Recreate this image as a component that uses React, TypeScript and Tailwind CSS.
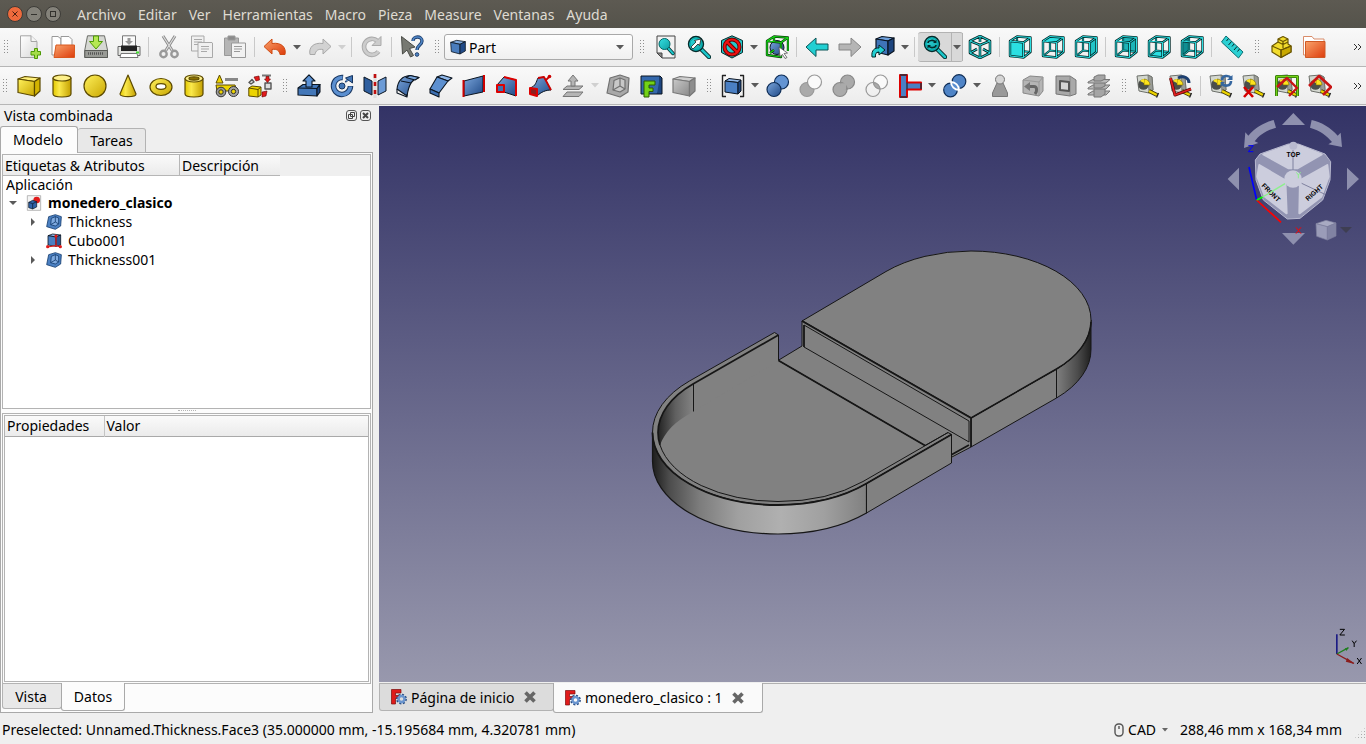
import type { ReactNode } from "react";

const INK = "#0b1521";
const TEAL_INK = "#042a2a";

/* ---------- shared gradients ---------- */

function Gradients() {
    const stops: [string, string, string][] = [
        ["gYellow", "#fff15c", "#c9a600"],
        ["gBlue", "#7ba6dc", "#204a87"],
        ["gGrey", "#c9c9c9", "#8a8a8a"],
        ["gTeal", "#34e0e2", "#0f9ea2"],
        ["gOrange", "#f9a36b", "#dd3c0c"],
        ["gPaper", "#ffffff", "#d9d9d9"],
    ];
    return (
        <svg className="absolute h-0 w-0" aria-hidden="true">
            <defs>
                {stops.map(([id, from, to]) => (
                    <linearGradient key={id} id={id} x1="0" y1="0" x2="1" y2="1">
                        <stop offset="0" stopColor={from} />
                        <stop offset="1" stopColor={to} />
                    </linearGradient>
                ))}
                <linearGradient id="gBarrel" x1="0" y1="0" x2="1" y2="0">
                    <stop offset="0" stopColor="#e3c800" />
                    <stop offset="0.350" stopColor="#fbe94c" />
                    <stop offset="1" stopColor="#c4a000" />
                </linearGradient>
            </defs>
        </svg>
    );
}

const Svg = ({ children }: { children: ReactNode }) => (
    <svg viewBox="0 0 24 24" className="h-6 w-6 shrink-0" fill="none" strokeLinejoin="round" aria-hidden="true">
        {children}
    </svg>
);

/* ---------- icon parts ---------- */

const Solid = ({ fill, top, side, ink = INK }: { fill: string; top: string; side: string; ink?: string }) => (
    <g stroke={ink} strokeWidth="1.2">
        <path d="M1 5L8 2.5 23 4 17.500 7.500z" fill={top} />
        <path d="M1 5L17.500 7.500V22L1 18.500z" fill={fill} />
        <path d="M17.500 7.500L23 4V17L17.500 22z" fill={side} />
    </g>
);

const Lens = ({ children }: { children?: ReactNode }) => (
    <>
        <path d="M14.500 14.500L22 22" stroke={TEAL_INK} strokeWidth="4.500" strokeLinecap="round" />
        <path d="M14.500 14.500L22 22" stroke="#1cc5c9" strokeWidth="2.500" strokeLinecap="round" />
        <circle cx="9" cy="9" r="7.500" fill="url(#gTeal)" stroke={TEAL_INK} strokeWidth="1.400" />
        <circle cx="9" cy="9" r="6" stroke="#0aa" strokeWidth="1" />
        {children}
    </>
);

const faces: Record<string, string> = {
    front: "M2 6L15.500 7.500V22.500L2 21z",
    top: "M2 6L9 1.500 22.500 2.500 15.500 7.500z",
    right: "M15.500 7.500L22.500 2.500V17L15.500 22.500z",
    rear: "M9 1.500L22.500 2.500V17L9 15.500z",
    bottom: "M2 21L9 15.500 22.500 17 15.500 22.500z",
    left: "M2 6L9 1.500V15.500L2 21z",
};

const faceFill: Record<string, string> = {
    front: "#2bdfe2",
    top: "#2bdfe2",
    right: "#22c4c7",
    rear: "#1db4b8",
    bottom: "#2bdfe2",
    left: "#0e8d91",
};

const WireCube = ({ face }: { face: string }) => {
    const back = "M9 1.500V15.500M9 15.500L2 21M9 15.500L22.500 17";
    const front = "M2 6L15.500 7.500V22.500L2 21zM2 6L9 1.500 22.500 2.500 15.500 7.500M22.500 2.500V17L15.500 22.500";
    const hidden = face === "rear" || face === "bottom" || face === "left";
    return (
        <>
            {hidden && <path d={faces[face]} fill={faceFill[face]} />}
            <path d={back} stroke={TEAL_INK} strokeWidth="2.200" />
            <path d={back} stroke="#1fc9cc" strokeWidth="0.900" />
            {!hidden && <path d={faces[face]} fill={faceFill[face]} />}
            <path d={front} stroke={TEAL_INK} strokeWidth="2.400" />
            <path d={front} stroke="#2bdfe2" strokeWidth="1" />
        </>
    );
};

const Tape = ({ children }: { children?: ReactNode }) => (
    <>
        <path d="M1 2L12 1 16 3 17 16 13 19 3 17z" fill="#d3d7cf" stroke="#6d706b" />
        <path d="M12 1L16 3 17 16 13 19z" fill="#9a9c97" stroke="#6d706b" strokeWidth="0.800" />
        <circle cx="7.500" cy="10.500" r="5.300" fill="#4b4e4b" />
        <path d="M8 11V5a6 6 0 0 1 6 6z" fill="#fce21c" stroke="#7a6a00" strokeWidth="0.600" />
        <path d="M4 7a5 5 0 0 1 4-2v4z" fill="#fce21c" />
        <path d="M13 17L21 21" stroke="#3a3300" strokeWidth="4" />
        <path d="M13 17L21 21" stroke="#edd400" strokeWidth="2.400" />
        <path d="M22.500 19L20.500 23.500" stroke="#222" strokeWidth="1.400" />
        {children}
    </>
);

const Shell = ({ grey }: { grey?: boolean }) => {
    const ink = grey ? "#707070" : "#123a6c";
    return (
        <g stroke={ink} strokeWidth="1.200">
            <path d="M4 4L14 1 23 4 22 18 14 23 1 19z" fill={grey ? "#a8a8a8" : "#4b80c2"} />
            <path d="M8 6.500L14 4 19 6V15L14 18 7 16z" fill={grey ? "#c8c8c8" : "#7faadf"} />
            <path d="M14 4V12L19 15M14 12L7 16" fill="none" />
        </g>
    );
};

const twoRings = (a: string, b: string, both: string, ink: string) => (
    <g stroke={ink} strokeWidth="1.200">
        <circle cx="15.500" cy="8" r="7" fill={a} />
        <circle cx="8" cy="15.500" r="7" fill={b} />
        <path d="M8.600 8.600a7 7 0 0 1 6.400 6.400a7 7 0 0 1-6.400-6.400z" fill={both} />
    </g>
);

const Caret = ({ tone = "text-[#5a5a5a]" }: { tone?: string }) => (
    <svg viewBox="0 0 8 5" className={`h-[5px] w-2 shrink-0 ${tone}`} aria-hidden="true">
        <path d="M0 0H8L4 4.500z" fill="currentColor" />
    </svg>
);

/* ---------- icons ---------- */

const icons: Record<string, ReactNode> = {
    new: (
        <>
            <path d="M2.500 .8H13L19 6.500V22.500H2.500z" fill="url(#gPaper)" stroke="#a5a5a5" />
            <path d="M13 .8V6.500H19" fill="#f5f5f5" stroke="#a5a5a5" />
            <path d="M16.500 13.500H19.500V16.500H22.500V20H19.500V23.500H16.500V20H13V16.500H16.500z" fill="#a6dd4a" stroke="#4e9a06" />
        </>
    ),
    open: (
        <>
            <path d="M1 1.500H7L10 4V20H1z" fill="#fff" stroke="#999" />
            <path d="M10 1.500H18L21 4.500V12H10z" fill="#fff" stroke="#999" />
            <path d="M3 22.500L5 10H23.500V22.500z" fill="url(#gOrange)" stroke="#d9581f" />
        </>
    ),
    save: (
        <>
            <path d="M3.500 .8H20.500L23.500 15V22.500H.8V15z" fill="#d6d8d3" stroke="#6b6d68" />
            <path d="M.8 15.500H23.500V22.500H.8z" fill="#999b96" stroke="#5a5c58" />
            <path d="M4 18.500H20" stroke="#555" strokeWidth="2.500" strokeDasharray="1 1" />
            <path d="M9.500 1H14.500V6.500H18.500L12 14 5.500 6.500H9.500z" fill="#b5e853" stroke="#4e9a06" />
        </>
    ),
    print: (
        <>
            <path d="M5.500 .8H18.500V12H5.500z" fill="#fafafa" stroke="#777" />
            <path d="M10.500 3H13.500V6H16L12 10 8 6H10.500z" fill="#999" />
            <path d="M1 11.500H23V20.500H1z" fill="#e3e4e1" stroke="#666" />
            <path d="M4 10.500H20V16H4z" fill="#222" />
            <path d="M4 18.500H20L21 22.500H3z" fill="#fff" stroke="#777" />
            <path d="M19 17.500H22" stroke="#4d3" strokeWidth="2" />
        </>
    ),
    cut: (
        <g stroke="#999" strokeWidth="1.800">
            <path d="M6 1L15.500 16M18 1L8.500 16" stroke="#8a8a8a" strokeWidth="3" />
            <path d="M6 1L15.500 16M18 1L8.500 16" stroke="#ddd" strokeWidth="1.200" />
            <circle cx="6.500" cy="19" r="3.200" strokeWidth="2.400" />
            <circle cx="17.500" cy="19" r="3.200" strokeWidth="2.400" />
        </g>
    ),
    copy: (
        <g fill="#f0f0f0" stroke="#a9a9a9">
            <path d="M1.500 1H14V16H1.500z" />
            <path d="M4 4.500H12M4 7H12M4 9.500H8" />
            <path d="M8 7.500H22L22.500 8V22.500H8z" />
            <path d="M11 11.500H19M11 14H19M11 16.500H17" />
        </g>
    ),
    paste: (
        <g stroke="#999">
            <path d="M1.500 3H15.500V20.500H1.500z" fill="#b5b5b5" />
            <path d="M5 1H12V5H5z" fill="#8c8c8c" />
            <path d="M8.500 8H22.500V22.500H8.500z" fill="#f2f2f2" />
            <path d="M11 11.500H19M11 14H19M11 16.500H17" />
        </g>
    ),
    undo: <path d="M9 4L1 11.500 9 19V14.500C14 13.500 16.500 16 17 19.500H22C23.500 13 19 7 9 8.500z" fill="url(#gOrange)" stroke="#cf4a12" />,
    redo: <path d="M15 4L23 11.500 15 19V14.500C10 13.500 7.500 16 7 19.500H2C.5 13 5 7 15 8.500z" fill="#d2d2d2" stroke="#a8a8a8" />,
    refresh: (
        <>
            <path d="M18.500 16.500A8 8 0 1 1 17.500 6" stroke="#aaa" strokeWidth="4.600" />
            <path d="M21 1.500V10.500H12z" fill="#ccc" stroke="#aaa" />
            <path d="M18.500 16.500A8 8 0 1 1 17.500 6" stroke="#ccc" strokeWidth="2.800" />
        </>
    ),
    whats: (
        <>
            <path d="M1.500 1.500L15 12 9.500 13.500 13.500 20.500 10.500 22 7 15 2.500 19z" fill="#777972" stroke="#4a4c47" />
            <path d="M13 6C13 1 22 .5 22 6 22 10 17 10 17 15" stroke="#20406e" strokeWidth="3.400" />
            <path d="M13 6C13 1 22 .5 22 6 22 10 17 10 17 15" stroke="#4f86c6" strokeWidth="1.600" />
            <circle cx="17" cy="19.500" r="1.800" fill="#4f86c6" stroke="#20406e" />
        </>
    ),
    part: (
        <g stroke={INK} strokeWidth="1.200">
            <path d="M1 5L10 2 23 4 15 8z" fill="#7fa9dc" />
            <path d="M1 5L15 8V22.500L2 19z" fill="#4a7dbd" />
            <path d="M15 8L23 4V18L15 22.500z" fill="#204a87" />
        </g>
    ),
    fitAll: (
        <>
            <path d="M3 1H21V23H8L3 18z" fill="#f2f2f2" stroke="#444" />
            <path d="M3 18H8V23z" fill="#888" stroke="#444" />
            <path d="M14 13L19 18.500" stroke={TEAL_INK} strokeWidth="3.500" strokeLinecap="round" />
            <path d="M14 13L19 18.500" stroke="#1cc5c9" strokeWidth="2" strokeLinecap="round" />
            <circle cx="10.500" cy="9" r="5.500" fill="url(#gTeal)" stroke="#066" />
        </>
    ),
    fitSel: (
        <Lens>
            <path d="M4 12L9 7 7.500 5.500 14 4 12.500 10.500 11 9 6 14z" fill="#fff" stroke="#222" strokeWidth="0.800" />
        </Lens>
    ),
    noDraw: (
        <>
            <path d="M12 .8L22.500 5.500V17.500L12 23 1.500 17.500V5.500z" fill="#23c8cb" stroke={TEAL_INK} />
            <circle cx="12" cy="12" r="7.500" stroke="#600" strokeWidth="4" />
            <path d="M7 7L17 17" stroke="#600" strokeWidth="4" />
            <circle cx="12" cy="12" r="7.500" stroke="#e11" strokeWidth="2.200" />
            <path d="M7 7L17 17" stroke="#e11" strokeWidth="2.200" />
        </>
    ),
    bbox: (
        <>
            <circle cx="12" cy="12.500" r="7" fill="url(#gBlue)" stroke={INK} />
            <path d="M2 6L16 7.500V22L2 20zM2 6L9 1.500 23 2.500 16 7.500M23 2.500V16M9 2V7M5 18L9 15" stroke="#0a3a0a" strokeWidth="2.400" />
            <path d="M2 6L16 7.500V22L2 20zM2 6L9 1.500 23 2.500 16 7.500M23 2.500V16M9 2V7M5 18L9 15" stroke="#14d814" strokeWidth="1.200" />
            <path d="M14 12L22.500 18 19 18.500 22 22.500 20 23.500 17.500 19.500 15 21.500z" fill="#fff" stroke="#555" strokeWidth="0.800" />
        </>
    ),
    back: <path d="M1 12L11 3V9H23V15H11V21.500z" fill="#22cfd2" stroke="#0a5456" />,
    forward: <path d="M23 12L13 3V9H1V15H13V21.500z" fill="#b5b5b5" stroke="#868686" />,
    link: (
        <>
            <g stroke={INK} strokeWidth="1.200">
                <path d="M5 4L11 1.500 23 3 17 6z" fill="#6fa0dc" />
                <path d="M5 4L17 6V20L5 17z" fill="#3f74b8" />
                <path d="M17 6L23 3V16L17 20z" fill="#1d457f" />
            </g>
            <path d="M1 22C0 15 4 12.500 8 13V10L14 15 8 20V17C5 17 4 19 4.500 22z" fill="#22cfd2" stroke={TEAL_INK} />
        </>
    ),
    zoomDraw: (
        <Lens>
            <path d="M5 8C5 5 11 4.500 12 7M13 10C13 13 7 13.500 6 11" stroke={TEAL_INK} strokeWidth="1.600" />
            <path d="M13.500 4.500V8H10zM4.500 13.500V10H8z" fill={TEAL_INK} />
        </Lens>
    ),
    iso: (
        <>
            <path d="M12 1L22 6V18L12 23 2 18V6zM2 6L12 10 22 6M12 10V23M12 1V7M2 18L9 14M22 18L15 14" stroke={TEAL_INK} strokeWidth="2.600" />
            <path d="M12 1L22 6V18L12 23 2 18V6zM2 6L12 10 22 6M12 10V23M12 1V7M2 18L9 14M22 18L15 14" stroke="#2bdfe2" strokeWidth="1" />
        </>
    ),
    ruler: (
        <>
            <path d="M6 1L23 17 18.500 23 1.500 7z" fill="#2bd0d3" stroke="#0b6f72" />
            <path d="M8.500 3.500L6.500 6M11.500 6.500L8.500 10M14 9L12 11.500M17 11.500L14 15M19.500 14L17.500 16.500" stroke={TEAL_INK} />
        </>
    ),
    parts: (
        <g stroke="#6b5700" strokeWidth="1.200">
            <path d="M3 11L9 7V4L14 1.500 19 4V9L22 11V17L12 22.500 3 17z" fill="#f2dc2c" />
            <path d="M12 15L22 11V17L12 22.500z" fill="#c9a900" />
            <path d="M3 11L12 15 22 11M12 15V22.500M9 7L14 9.500 19 7M9 4L14 6.500 19 4M14 6.500V13" />
        </g>
    ),
    group: (
        <>
            <path d="M1.500 1.500H10L12 4H22V20H1.500z" fill="#fff" stroke="#d98c6a" />
            <path d="M3.500 6.500H23V22.500H3.500z" fill="url(#gOrange)" stroke="#cf5a26" />
        </>
    ),
    box: <Solid fill="url(#gYellow)" top="#fff07a" side="#d3b300" ink="#5c4a00" />,
    cylinder: (
        <g stroke="#5c4a00" strokeWidth="1.200">
            <path d="M3 4V20C3 24 21 24 21 20V4z" fill="url(#gBarrel)" />
            <ellipse cx="12" cy="4" rx="9" ry="3" fill="#fdf08a" />
        </g>
    ),
    sphere: <circle cx="12" cy="12" r="11" fill="url(#gYellow)" stroke="#5c4a00" strokeWidth="1.200" />,
    cone: <path d="M12 1L20 20C20 23.500 4 23.500 4 20z" fill="url(#gBarrel)" stroke="#5c4a00" strokeWidth="1.200" />,
    torus: (
        <g stroke="#5c4a00" strokeWidth="1.200">
            <ellipse cx="12" cy="13" rx="11" ry="8.500" fill="url(#gYellow)" />
            <ellipse cx="12" cy="12.500" rx="5" ry="2.800" fill="#fff" />
        </g>
    ),
    tube: (
        <g stroke="#5c4a00" strokeWidth="1.200">
            <path d="M3 4.500V20C3 24 21 24 21 20V4.500z" fill="url(#gBarrel)" />
            <ellipse cx="12" cy="4.500" rx="9" ry="3.500" fill="#fdf08a" />
            <ellipse cx="12" cy="4.500" rx="5" ry="1.600" fill="#8a7000" />
        </g>
    ),
    primitives: (
        <>
            <path d="M4.500 1L8 9H1z" fill="#edd400" stroke="#5c4a00" />
            <path d="M10 5.500H23" stroke="#888" strokeWidth="3" />
            <path d="M1 11H20L22 17H2z" fill="#edd400" stroke="#5c4a00" />
            <circle cx="6" cy="18" r="4.800" fill="#999" stroke="#333" />
            <circle cx="18.500" cy="17.500" r="5" fill="#a5a5a5" stroke="#333" />
            <circle cx="6" cy="18" r="2.200" fill="#edd400" stroke="#333" />
            <circle cx="18.500" cy="17.500" r="2.200" fill="#edd400" stroke="#333" />
        </>
    ),
    builder: (
        <>
            <path d="M.8 14L4 12 13 13V21L10 23 .8 22z" fill="#edd400" stroke="#5c4a00" />
            <path d="M.8 14L10 15.500V23M10 15.500L13 13" stroke="#5c4a00" />
            <path d="M1 8.500L4 5.500 6 8 3 10zM17 9H23V15H17z" fill="#ddd" stroke="#555" strokeWidth="1.400" />
            <path d="M14 1.500H23" stroke="#777" strokeWidth="2" />
            <path d="M18 2.500H21V5H22.500L19.500 8.500 16.500 5H18zM6 3L11 2 11.500 6 8 7zM14 18L19 17 18 22 14 23z" fill="#e01b1b" stroke="#600" strokeWidth="0.600" />
        </>
    ),
    extrude: (
        <g stroke={INK} strokeWidth="1.100">
            <path d="M1 14L6 10.500H23L20 14.500V22L1 21z" fill="#4377b8" />
            <path d="M20 14.500L23 10.500V18L20 22z" fill="#204a87" />
            <path d="M1 14L20 14.500" fill="none" />
            <path d="M9 13V7H6L12 .8 18 7H15V13z" fill="#5c92d4" />
        </g>
    ),
    revolve: (
        <>
            <path d="M13 3.500A8.500 8.500 0 1 0 20.500 12M16.500 5.500A8.500 8.500 0 0 1 18 7" stroke="#17355f" strokeWidth="5.500" />
            <path d="M12.500 3.500A8.500 8.500 0 1 0 20.500 12.500M17 5.500A8.500 8.500 0 0 1 18 6.500" stroke="#5b8fd0" strokeWidth="3.600" />
            <circle cx="12" cy="12" r="3" fill="#4376b6" stroke="#17355f" />
            <path d="M15.500 4L22.500 1.500V9z" fill="#4376b6" stroke="#17355f" />
        </>
    ),
    mirror: (
        <>
            <path d="M1 3L9 7V21L1 17z" fill="#2f5f9f" stroke={INK} />
            <path d="M23 3L15 7V21L23 17z" fill="#6c9bd6" stroke={INK} />
            <path d="M12 0V24" stroke="#ddd" strokeWidth="3.200" />
            <path d="M12 0V24" stroke="#c01010" strokeWidth="2.600" strokeDasharray="4 4" />
        </>
    ),
    fillet: (
        <g stroke={INK} strokeWidth="1.100">
            <path d="M1 15C2 6 7 2 14 1.500L23 3.500C17 5 13 9 11 22z" fill="url(#gBlue)" />
            <path d="M1 15L1 19 11 23V20M5 7L15 9" />
            <path d="M14 1.500L23 3.500 19 6 10 3.500z" fill="#7ba6dc" />
        </g>
    ),
    chamfer: (
        <g stroke={INK} strokeWidth="1.100">
            <path d="M8 3L13 1 23 4 19 7z" fill="#8fb6e8" />
            <path d="M8 3L19 7 10 19 1 15z" fill="#5d90d0" />
            <path d="M1 15L10 19V23L1 19z" fill="#3c6fb2" />
        </g>
    ),
    ruled: (
        <>
            <path d="M2 7L21 2V18L2 22z" fill="url(#gBlue)" stroke={INK} />
            <path d="M1.500 6V23M22 1V18" stroke="#c00" strokeWidth="2" />
        </>
    ),
    loft: (
        <>
            <path d="M2 11L9 3 21 6V22L9 18z" fill="url(#gBlue)" stroke={INK} />
            <path d="M9 3L21 6V22" stroke="#d00" strokeWidth="2" />
            <path d="M2 11H9V18H2z" fill="#3f70ae" stroke="#d00" strokeWidth="2" />
        </>
    ),
    sweep: (
        <>
            <path d="M2 14C8 12 8 8 10 4L16 3 23 16C18 16 13 18 9 22z" fill="url(#gBlue)" stroke={INK} />
            <path d="M10 4L16 3 23 16M18 6L21 3" stroke="#c00" strokeWidth="1.800" />
            <path d="M2 14L9 15V22L2 20z" fill="#8b2020" stroke="#d00" strokeWidth="2" />
            <circle cx="21.500" cy="2.500" r="1.800" fill="#c00" />
        </>
    ),
    offset: (
        <g fill="#b5b5b5" stroke="#777">
            <path d="M6 18H22L18 22.500H2z" />
            <path d="M6 12H22L18 15.500H2z" />
            <path d="M10 12V7H7L12 1 17 7H14V12z" />
        </g>
    ),
    thickGrey: <Shell grey />,
    faceProj: (
        <>
            <path d="M2 2H21V16L18 20H2z" fill="#3468ac" stroke={INK} />
            <path d="M21 2L23 4V20L18 20" fill="#1d457f" stroke={INK} />
            <path d="M5 7H16V11H10V14H14V17.500H10V23H5z" fill="#73d216" stroke="#2a5a00" />
        </>
    ),
    greyBox: <Solid fill="url(#gGrey)" top="#cfcfcf" side="#8e8e8e" ink="#777" />,
    compound: (
        <>
            <path d="M5 1.500H1.500V22.500H5M19 1.500H22.500V22.500H19" stroke="#222" strokeWidth="1.400" />
            <g stroke={INK}>
                <path d="M4 7L8 4.500 20 6 17 8.500z" fill="#8fb6e8" />
                <path d="M4 7L17 8.500V20L4 18z" fill="#4a7fc3" />
                <path d="M17 8.500L20 6V17L17 20z" fill="#1d457f" />
            </g>
        </>
    ),
    bool: (
        <g stroke="#0e2d57" strokeWidth="1.200">
            <circle cx="15.500" cy="8" r="7" fill="#6394d3" />
            <circle cx="8" cy="15.500" r="7" fill="url(#gBlue)" />
        </g>
    ),
    cutBool: (
        <g stroke="#999" strokeWidth="1.200">
            <circle cx="8" cy="15.500" r="7" fill="#aaa" />
            <circle cx="15.500" cy="8" r="7" fill="#fafafa" />
        </g>
    ),
    fuse: (
        <>
            {twoRings("#aaa", "#aaa", "#aaa", "#888")}
            <path d="M8 9.500L14.500 9 14 15.500 9 15z" fill="#aaa" />
        </>
    ),
    common: twoRings("#fafafa", "none", "#aaa", "#999"),
    join: (
        <>
            <path d="M2 1H9V8.500H23V15.500H9V23H2z" fill="#4a80c4" stroke="#d00" strokeWidth="2" />
            <path d="M2 1H9M2 23H9M23 9V15M9 8.500V15.500" stroke="#234" strokeWidth="1.400" />
        </>
    ),
    split: (
        <>
            <g fill="#4f84c6" stroke="#0e2d57" strokeWidth="1.200">
                <circle cx="16" cy="7.500" r="6.800" />
                <circle cx="7.500" cy="16" r="6.800" />
            </g>
            <path d="M8 8a8 8 0 0 1 8 8a8 8 0 0 1-8-8z" fill="#5b8fd0" stroke="#fff" strokeWidth="1.800" />
        </>
    ),
    check: (
        <g stroke="#777">
            <path d="M9 9H15L19.500 19V22.500H4.500V19z" fill="#999" />
            <circle cx="12" cy="5.500" r="4.500" fill="#d5d5d5" />
        </g>
    ),
    defeature: (
        <>
            <path d="M2 6L9 2 22 3V17L18 22 2 19z" fill="#b5b5b5" stroke="#888" />
            <path d="M2 6L18 8V22M18 8L22 3" stroke="#999" />
            <path d="M8 12.500H13C16 12.500 16.500 17 14 20" stroke="#666" strokeWidth="3" />
            <path d="M3 12.500L9 8V17z" fill="#777" />
        </>
    ),
    section: (
        <>
            <path d="M2 2H16L22 6V20L16 22 2 20z" fill="#a9a9a9" stroke="#777" />
            <path d="M16 2V22" stroke="#888" />
            <path d="M6 7L15 8V17L6 16z" fill="#d5d5d5" stroke="#555" strokeWidth="2" />
        </>
    ),
    crossSec: (
        <g fill="#a5a5a5" stroke="#777">
            <path d="M1 20L6 17H23L19 21H1z" fill="#b9b9b9" />
            <path d="M7 14H18V20L14 23H7z" />
            <path d="M1 14L6 11H23L19 15H1z" fill="#b9b9b9" />
            <path d="M7 8H18V12L14 14H7z" />
            <path d="M1 8L6 5.500H23L19 9H1z" fill="#b9b9b9" />
            <path d="M7 3L11 1H18V5L14 7H7z" />
        </g>
    ),
    linear: <Tape />,
    angular: (
        <Tape>
            <path d="M9 4C15 1 20 4 20 9" stroke="#1d3f70" strokeWidth="3" />
            <path d="M1.500 4L6 21 22 15" stroke="#5a0808" strokeWidth="3" />
            <path d="M1.500 4L6 21 22 15" stroke="#e02020" strokeWidth="1.800" />
        </Tape>
    ),
    measureRefresh: (
        <Tape>
            <path d="M13 6C13 1 20 1 22 4M22 7C22 13 15 12 13 10" stroke="#35669f" strokeWidth="2.600" />
            <path d="M23.500 1V6H18zM11.500 12.500V8H16z" fill="#35669f" />
        </Tape>
    ),
    measureClear: (
        <Tape>
            <path d="M2 13L11 23M11 13L2 23" stroke="#d40000" strokeWidth="2.600" />
        </Tape>
    ),
    measureAll: (
        <Tape>
            <path d="M1.500 22V2.500H22.500V22" stroke="#2f6f0c" strokeWidth="3" />
            <path d="M1.500 22V2.500H22.500V22" stroke="#73d216" strokeWidth="1.400" />
            <path d="M2 13L12 4 22 14 14 22" stroke="#c81414" strokeWidth="2.400" />
        </Tape>
    ),
    measure3d: (
        <Tape>
            <path d="M1 12L11 2 23 13 15 21" stroke="#c81414" strokeWidth="2.600" />
        </Tape>
    ),
};

/* ---------- toolbar widgets ---------- */

const ToolButton = ({ name, label }: { name: string; label: string }) => (
    <button type="button" title={label} aria-label={label} className="flex h-8 w-[33px] shrink-0 items-center justify-center">
        <Svg>{icons[name] ?? <WireCube face={name} />}</Svg>
    </button>
);

const Drop = ({ off, label }: { off?: boolean; label: string }) => (
    <button type="button" aria-label={label} className="flex h-8 w-3 shrink-0 items-center justify-center">
        <Caret tone={off ? "text-[#d0d0d0]" : "text-[#5a5a5a]"} />
    </button>
);

const Sep = () => (
    <div className="flex w-[7px] shrink-0 justify-center">
        <div className="h-5 w-px bg-[#c9c9c9]" />
    </div>
);

const Grip = () => (
    <div className="flex w-4 shrink-0 justify-center">
        <div className="h-4 w-[5px] bg-[radial-gradient(#8e8e8e_30%,transparent_40%)] bg-[size:3px_3px]" />
    </div>
);

const More = () => (
    <button type="button" aria-label="Más herramientas" className="ml-auto flex w-[18px] shrink-0 items-center justify-center">
        <svg viewBox="0 0 9 8" className="h-2 w-[9px]" fill="none" stroke="#333" aria-hidden="true">
            <path d="M1 1L4 4 1 7M5 1L8 4 5 7" />
        </svg>
    </button>
);

// "|" separator, ":" grip, "v" menu arrow, "-" disabled menu arrow
const renderTools = (tools: string[][]) =>
    tools.map(([name, label], i) => {
        if (name === "|") return <Sep key={i} />;
        if (name === ":") return <Grip key={i} />;
        if (name === "v") return <Drop key={i} label={label} />;
        if (name === "-") return <Drop key={i} off label={label} />;
        return <ToolButton key={i} name={name} label={label} />;
    });

const fileTools = [
    ["new", "Nuevo"], ["open", "Abrir"], ["save", "Guardar"], ["print", "Imprimir"], ["|"],
    ["cut", "Cortar"], ["copy", "Copiar"], ["paste", "Pegar"], ["|"],
    ["undo", "Deshacer"], ["v", "Lista deshacer"], ["redo", "Rehacer"], ["-", "Lista rehacer"], ["|"],
    ["refresh", "Refrescar"], ["|"], ["whats", "¿Qué es esto?"], [":"],
];

const viewTools = [
    [":"], ["fitAll", "Ajustar todo"], ["fitSel", "Ajustar selección"], ["noDraw", "Estilo de dibujo"], ["v", "Estilos"],
    ["bbox", "Cuadro delimitador"], ["|"], ["back", "Atrás"], ["forward", "Adelante"], ["link", "Ir al objeto"], ["v", "Enlaces"], ["|"],
];

const cameraTools = [
    ["iso", "Isométrica"], ["|"], ["front", "Frontal"], ["top", "Superior"], ["right", "Derecha"], ["|"],
    ["rear", "Trasera"], ["bottom", "Inferior"], ["left", "Izquierda"], ["|"],
    ["ruler", "Medir distancia"], [":"], ["parts", "Crear pieza"], ["group", "Crear grupo"],
];

const partTools = [
    ["box", "Cubo"], ["cylinder", "Cilindro"], ["sphere", "Esfera"], ["cone", "Cono"], ["torus", "Toro"], ["tube", "Tubo"],
    ["primitives", "Primitivas"], ["builder", "Constructor de formas"], [":"],
    ["extrude", "Extruir"], ["revolve", "Revolución"], ["mirror", "Simetría"], ["fillet", "Redondeo"], ["chamfer", "Chaflán"],
    ["ruled", "Superficie reglada"], ["loft", "Puente"], ["sweep", "Barrido"], ["offset", "Desfase"], ["-", "Desfases"],
    ["thickGrey", "Espesor"], ["faceProj", "Proyección"], ["greyBox", "Color por cara"], [":"],
    ["compound", "Compuesto"], ["v", "Compuestos"], ["bool", "Booleana"], ["cutBool", "Corte"], ["fuse", "Unión"],
    ["common", "Intersección"], ["join", "Conectar"], ["v", "Uniones"], ["split", "Dividir"], ["v", "Divisiones"],
    ["check", "Comprobar geometría"], ["defeature", "Quitar función"], ["section", "Sección"], ["crossSec", "Secciones"], [":"],
    ["linear", "Medida lineal"], ["angular", "Medida angular"], ["|"], ["measureRefresh", "Actualizar medidas"],
    ["measureClear", "Borrar medidas"], ["measureAll", "Mostrar medidas"], ["measure3d", "Medidas 3D"],
];

function MenuBar() {
    const menus = ["Archivo", "Editar", "Ver", "Herramientas", "Macro", "Pieza", "Measure", "Ventanas", "Ayuda"];
    return (
        <header className="flex h-7 shrink-0 items-center bg-[linear-gradient(#5d5a52,#55534b)] pl-[7px] text-[#dfdbd2]">
            <div className="flex gap-[3px]">
                <button type="button" aria-label="Cerrar" className="flex size-4 items-center justify-center rounded-full border border-[#3c3b37] bg-[#ee6a3c]">
                    <svg viewBox="0 0 6 6" className="size-[6px]" stroke="#4a2010" aria-hidden="true"><path d="M.5 .5L5.500 5.500M5.500 .5L.5 5.500" /></svg>
                </button>
                <button type="button" aria-label="Minimizar" className="flex size-4 items-center justify-center rounded-full border border-[#3c3b37] bg-[#84827a]">
                    <span className="h-px w-[6px] bg-[#33322e]" />
                </button>
                <button type="button" aria-label="Restaurar" className="flex size-4 items-center justify-center rounded-full border border-[#3c3b37] bg-[#84827a]">
                    <span className="size-[6px] border border-[#33322e]" />
                </button>
            </div>
            <nav className="ml-4 flex gap-3">
                {menus.map((m) => (
                    <button key={m} type="button">{m}</button>
                ))}
            </nav>
        </header>
    );
}

function Toolbars() {
    const row = "flex items-center overflow-hidden border-b border-[#b6b6b6] bg-[linear-gradient(#f9f9f9,#ececec)]";
    return (
        <div className="shrink-0">
            <div className={`${row} h-[39px]`}>
                <div className="-ml-[3px] flex"><Grip /></div>
                {renderTools(fileTools)}
                <div className="flex h-[26px] w-[189px] shrink-0 items-center rounded-[3px] border border-[#a9a9a9] bg-[linear-gradient(#fefefe,#f0f0f0)] pr-2 pl-[5px]">
                    <svg viewBox="0 0 24 24" className="size-4 shrink-0" aria-hidden="true">{icons.part}</svg>
                    <select aria-label="Banco de trabajo" className="min-w-0 flex-1 appearance-none bg-transparent pl-[3px] outline-none">
                        <option>Part</option>
                    </select>
                    <Caret />
                </div>
                {renderTools(viewTools)}
                <div className="flex h-[30px] shrink-0 items-center rounded-[3px] border-y border-[#b3b3b3] bg-[#d9d9d9]">
                    <ToolButton name="zoomDraw" label="Sincronizar vista" />
                    <div className="flex h-full items-center border-x border-[#b3b3b3]">
                        <button type="button" aria-label="Opciones de zoom" className="flex h-full w-[10px] items-center justify-center"><Caret /></button>
                    </div>
                </div>
                {renderTools(cameraTools)}
                <More />
            </div>
            <div className={`${row} h-[38px]`}>
                <div className="-ml-1 flex"><Grip /></div>
                {renderTools(partTools)}
                <More />
            </div>
        </div>
    );
}

/* ---------- combo view ---------- */

const ThicknessIcon = () => <svg viewBox="0 0 24 24" className="size-4 shrink-0" aria-hidden="true"><Shell /></svg>;

const CubeIcon = () => (
    <svg viewBox="0 0 24 24" className="size-4 shrink-0" aria-hidden="true">
        <g stroke={INK} strokeWidth="1.200">
            <path d="M3 4L10 1.500 22 3 15 6z" fill="#8fb6e8" />
            <path d="M3 4L15 6V20L3 18z" fill="#4a7fc3" />
            <path d="M15 6L22 3V18L15 20z" fill="#2a5796" />
        </g>
        <path d="M15 4V19M15 19L2 21M15 19L22 21" stroke="#e01b1b" strokeWidth="1.800" fill="none" />
        <g fill="#e01b1b"><circle cx="15" cy="4.500" r="2.400" /><circle cx="2.500" cy="20.500" r="2.400" /><circle cx="21.500" cy="20.500" r="2.400" /></g>
    </svg>
);

const DocIcon = () => (
    <svg viewBox="0 0 24 24" className="size-4 shrink-0" aria-hidden="true">
        <path d="M2 1H22V23H2z" fill="#f4f4f4" stroke="#999" />
        <circle cx="16" cy="7.500" r="5" fill="#e01b1b" />
        <path d="M4 11L10 8 16 10V18L10 21 4 19z" fill="#2f62a8" stroke={INK} />
        <path d="M4 11L10 13 16 10M10 13V21" stroke={INK} fill="none" />
    </svg>
);

const Twist = ({ open }: { open?: boolean }) => (
    <svg viewBox="0 0 8 8" className="size-2" aria-hidden="true">
        <path d={open ? "M0 2H8L4 6z" : "M2 0V8L6 4z"} fill="#5a5a5a" />
    </svg>
);

const TreeRow = ({ depth, icon, text, twist }: { depth: number; icon: ReactNode; text: string; twist?: "open" | "closed" }) => (
    <li className={`flex h-[19px] items-center pb-[2px] ${depth === 0 ? "pl-[6px] font-bold" : "pl-[26px]"}`}>
        <span className="flex w-[17px] shrink-0">
            {twist && (
                <button type="button" aria-label={`Alternar ${text}`}><Twist open={twist === "open"} /></button>
            )}
        </span>
        {icon}
        <span className="ml-[6px]">{text}</span>
    </li>
);

function ComboView() {
    const head = "bg-[linear-gradient(#fafafa,#ebebeb)]";
    return (
        <aside className="flex w-[373px] shrink-0 flex-col">
            <div className="flex h-5 items-center justify-between pr-[2px] pb-[2px] pl-1">
                <h2>Vista combinada</h2>
                <div className="flex gap-[3px]">
                    <button type="button" aria-label="Desacoplar" className="flex size-[11px] items-center justify-center rounded-[3px] border border-[#555]">
                        <svg viewBox="0 0 7 7" className="size-[7px]" fill="none" stroke="#444" aria-hidden="true"><path d="M2.500 .5H6.500V4.500H2.500zM.5 2.500H4.500V6.500H.5z" /></svg>
                    </button>
                    <button type="button" aria-label="Cerrar panel" className="flex size-[11px] items-center justify-center rounded-[3px] border border-[#555]">
                        <svg viewBox="0 0 7 7" className="size-[7px]" stroke="#444" strokeWidth="2" aria-hidden="true"><path d="M1 1L6 6M6 1L1 6" /></svg>
                    </button>
                </div>
            </div>
            <div className="z-10 -mb-px flex items-end">
                <button type="button" className="h-[27px] w-[78px] rounded-t-[3px] border border-b-0 border-[#a9a9a9] bg-[#fcfcfc] pr-[2px] pb-[2px]">Modelo</button>
                <button type="button" className="h-[25px] w-[68px] rounded-t-[3px] border border-l-0 border-[#b3b3b3] bg-[#e8e8e8]">Tareas</button>
            </div>
            <div className="flex min-h-0 flex-1 flex-col border border-[#a9a9a9] bg-[#fcfcfc] px-px pt-px">
                <section className="flex shrink grow basis-[254px] flex-col border border-[#b3b3b3] bg-white">
                    <div className="flex h-[21px] shrink-0 bg-[#efefef]">
                        <div className={`${head} flex w-[177px] items-center border-r border-b border-[#b6b6b6] pl-[2px]`}>Etiquetas &amp; Atributos</div>
                        <div className={`${head} flex w-[100px] items-center border-b border-[#b6b6b6] pl-[2px]`}>Descripción</div>
                    </div>
                    <ul>
                        <li className="flex h-[18px] items-center pb-[2px] pl-[3px]">Aplicación</li>
                        <TreeRow depth={0} twist="open" icon={<DocIcon />} text="monedero_clasico" />
                        <TreeRow depth={1} twist="closed" icon={<ThicknessIcon />} text="Thickness" />
                        <TreeRow depth={1} icon={<CubeIcon />} text="Cubo001" />
                        <TreeRow depth={1} twist="closed" icon={<ThicknessIcon />} text="Thickness001" />
                    </ul>
                </section>
                <div className="flex h-1 shrink-0 items-center justify-center">
                    <div className="w-[18px] border-t border-dotted border-[#b5b5b5]" />
                </div>
                <section className="flex shrink grow basis-[271px] flex-col border border-[#b3b3b3] bg-[#fcfcfc] p-px">
                    <div className="flex-1 border border-[#b3b3b3] bg-white">
                        <table className="w-full border-collapse">
                            <thead>
                                <tr className={`${head} h-[21px] border-b border-[#a9a9a9] text-left leading-5`}>
                                    <th className="w-[99px] border-r border-[#c4c4c4] p-0 pl-[2px] font-normal">Propiedades</th>
                                    <th className="p-0 pl-[2px] font-normal">Valor</th>
                                </tr>
                            </thead>
                            <tbody />
                        </table>
                    </div>
                </section>
                <div className="flex h-7 shrink-0 items-start">
                    <button type="button" className="h-[25px] w-[60px] rounded-b-[3px] border border-t-0 border-[#b3b3b3] bg-[#e8e8e8] pr-[2px]">Vista</button>
                    <button type="button" className="-mt-px -ml-px h-7 w-16 rounded-b-[3px] border border-t-0 border-[#a9a9a9] bg-[#fcfcfc]">Datos</button>
                </div>
            </div>
        </aside>
    );
}

/* ---------- 3D view ---------- */

const Model = () => (
    <svg viewBox="379 106 987 576" className="h-full w-full" fill="none" stroke="#161616" strokeLinejoin="round" role="img" aria-label="Modelo 3D">
        <defs>
            <linearGradient id="wallOut" gradientUnits="userSpaceOnUse" x1="652" y1="0" x2="867" y2="0">
                <stop offset="0" stopColor="#1c1c1c" />
                <stop offset="0.080" stopColor="#4c4c4c" />
                <stop offset="0.220" stopColor="#7c7c7c" />
                <stop offset="0.400" stopColor="#a0a0a0" />
                <stop offset="0.600" stopColor="#b0b0b0" />
                <stop offset="0.800" stopColor="#a0a0a0" />
                <stop offset="1" stopColor="#808080" />
            </linearGradient>
            <linearGradient id="wallIn" gradientUnits="userSpaceOnUse" x1="657" y1="0" x2="694" y2="0">
                <stop offset="0" stopColor="#202020" />
                <stop offset="0.500" stopColor="#606060" />
                <stop offset="1" stopColor="#848484" />
            </linearGradient>
            <linearGradient id="wallEnd" gradientUnits="userSpaceOnUse" x1="1056" y1="0" x2="1092" y2="0">
                <stop offset="0" stopColor="#808080" />
                <stop offset="0.600" stopColor="#4c4c4c" />
                <stop offset="1" stopColor="#1c1c1c" />
            </linearGradient>
        </defs>

        {/* lid */}
        <path d="M1056.500 369A120 69 0 0 0 1091 320V349A120 69 0 0 1 1056.500 398z" fill="url(#wallEnd)" strokeWidth="1" />
        <path d="M971 418L1056.500 369V398L971 447z" fill="#818181" strokeWidth="1" />
        <path d="M802 321L886 271.500A120 69 0 0 1 971 251A120 69 0 0 1 1091 320A120 69 0 0 1 1056.500 369L971 418z" fill="#818181" strokeWidth="1" />
        <path d="M1091 322A120 69 0 0 1 1056.500 369L971 418L802 321" strokeWidth="1.500" />

        {/* hinge strip */}
        <path d="M802 321L971 418V447L940 465 778 360.500 802 346z" fill="#818181" stroke="none" />
        <path d="M802 321V346L778 360.500M804 325L969 421V442L804 347M951 457.500L971 447" strokeWidth="1" />
        <path d="M802 321L971 418V447M804 325V347M951 455L969 445" strokeWidth="1.800" />

        {/* tray */}
        <path
            d="M652.500 432.500V461.500A125.500 72.500 0 0 0 778 534A125.500 72.500 0 0 0 866.500 513V483.500L778 505z"
            fill="url(#wallOut)"
            strokeWidth="1.200"
        />
        <path
            d="M774.500 332.500L689.500 381A125.500 72.500 0 0 0 652.500 432.500A125.500 72.500 0 0 0 778 505A125.500 72.500 0 0 0 866.500 483.500L951.500 434.500 948 432.500 925 445.500 778.500 360.500V335z"
            fill="#818181"
            strokeWidth="1"
        />
        <path d="M778.500 335L693 384A120 69 0 0 0 660 445C665 432 675 421 693 412z" fill="url(#wallIn)" stroke="none" />
        <path d="M778.500 335V361L693 411.500V384z" fill="#818181" stroke="none" />
        <path d="M693.500 384V411.500M660 445A120 69 0 0 0 778 501.500A120 69 0 0 0 863 481.500L948 432.500M778.500 335V360.500" strokeWidth="1" />
        <path d="M660 445A120 69 0 0 1 658 432.500A120 69 0 0 1 693 384L778.500 335M778.500 360.500L925 445.500" strokeWidth="1.700" />
        <path d="M866.500 483.500L951.500 434.500V463L866.500 513z" fill="#818181" strokeWidth="1" />
        <path d="M652.500 432.500A125.500 72.500 0 0 0 778 505A125.500 72.500 0 0 0 866.500 483.500L951.500 434.500" strokeWidth="1.800" />
    </svg>
);

const NavCube = () => (
    <svg viewBox="0 3 468 447" className="absolute top-0 right-0 h-[149px] w-[156px]" role="img" aria-label="Cubo de navegación">
        <g fill="#8e90ae">
            <path d="M216 60L250 24 285 60zM216 384H285L250 419zM87 188V256L53 222zM411 188V256L447 222z" />
            <path d="M191 45L198 68C170 76 147 90 134 109L145 114 102 129 106 82 115 92C135 68 162 52 191 45z" />
            <path d="M305 45L300 68C330 77 350 91 366 111L355 118 396 126 392 83 383 92C362 68 335 52 305 45z" />
        </g>
        <path d="M235 117H265L345 147 362 170 360 225 338 285 270 340 232 342 160 285 138 225 136 165 150 147z" fill="#9294b2" stroke="#b9bad0" strokeWidth="3" />
        <path d="M240 120H262L335 148 262 190 236 190 160 148zM148 180L226 226 230 325 165 275 142 215zM352 180L270 226 268 325 334 275 356 215z" fill="#cccddd" stroke="#cccddd" strokeWidth="6" strokeLinejoin="round" />
        <path d="M249 135V200M275 235L345 268" stroke="#7f819f" strokeWidth="3" />
        <circle cx="249" cy="222" r="26" fill="#cccddd" />
        <circle cx="250" cy="122" r="12" fill="#b9bad0" />
        <g fill="#000" fontFamily="Liberation Sans, sans-serif" fontWeight="700" textAnchor="middle">
            <text x="250" y="156" fontSize="20">TOP</text>
            <text x="184" y="270" fontSize="20" transform="rotate(45 184 262)">FRONT</text>
            <text x="312" y="270" fontSize="20" transform="rotate(-42 312 262)">RIGHT</text>
        </g>
        <path d="M140 285L117 186" stroke="#0000ff" strokeWidth="5" />
        <path d="M140 285L213 352" stroke="#ff0000" strokeWidth="5" />
        <path d="M140 285L158 276" stroke="#00ff00" strokeWidth="5" />
        <path d="M158 276L225 236" stroke="#8df08d" strokeWidth="4" />
        <g fill="none" strokeWidth="3">
            <path d="M115 122H130L115 140H130" stroke="#0000ff" />
            <path d="M258 367L273 386M273 367L258 386" stroke="#ff0000" />
            <path d="M259 202L265 210 272 202M265 210V220" stroke="#8df08d" />
        </g>
        <g stroke="#7f819f" strokeWidth="2">
            <path d="M318 356L348 346 378 354 352 365z" fill="#a8aac2" />
            <path d="M318 356L352 365V405L320 394z" fill="#9a9cb8" />
            <path d="M352 365L378 354V393L352 405z" fill="#8183a3" />
        </g>
        <path d="M390 366H426L408 384z" fill="#3e3e52" />
    </svg>
);

const AxisCross = () => (
    <svg viewBox="760 20 98 120" className="absolute right-0 bottom-[15px] h-10 w-[33px]" fill="none" aria-hidden="true">
        <path d="M771 101V42" stroke="#1c1c84" strokeWidth="5" />
        <path d="M771 101L806 82" stroke="#1f7f1f" strokeWidth="4" />
        <path d="M795 84L806 82 800 92z" fill="#1f7f1f" />
        <path d="M771 101L822 129" stroke="#8a1c1c" strokeWidth="4" />
        <path d="M802 113L824 131 798 124z" fill="#8a1c1c" />
        <path d="M780 27H794L780 44H795M817 61L823 70 830 61M823 70V80M832 113L845 131M845 113L832 131" stroke="#000" strokeWidth="3" />
    </svg>
);

const FreecadIcon = () => (
    <svg viewBox="0 0 16 16" className="size-4 shrink-0" aria-hidden="true">
        <path d="M.5 .5H10V4H4.500V6.500H8V9.500H4.500V15H.5z" fill="#e01b1b" stroke="#7a0c0c" strokeWidth="0.700" />
        <circle cx="10.500" cy="10" r="4.300" fill="none" stroke="#2a4f86" strokeWidth="2.200" strokeDasharray="1.900 1.470" />
        <circle cx="10.500" cy="10" r="3" fill="none" stroke="#6a95cf" strokeWidth="2.400" />
    </svg>
);

const CloseX = () => (
    <svg viewBox="0 0 12 12" className="size-3" stroke="#666" strokeWidth="3.600" aria-hidden="true">
        <path d="M1.500 1.500L10.500 10.500M10.500 1.500L1.500 10.500" />
    </svg>
);

const DocTab = ({ text, active }: { text: string; active?: boolean }) => (
    <div
        className={
            active
                ? "-mt-px -ml-px flex h-[30px] w-[210px] items-center rounded-b-[3px] border border-t-0 border-[#a9a9a9] bg-[#fafafa] pl-[11px]"
                : "flex h-[27px] w-[175px] items-center rounded-b-[3px] border border-t-0 border-[#b3b3b3] bg-[#dcdcdc] pl-[11px]"
        }
    >
        <button type="button" className="flex items-center gap-1 whitespace-nowrap">
            <FreecadIcon />
            {text}
        </button>
        <button type="button" aria-label={`Cerrar ${text}`} className="ml-[9px]"><CloseX /></button>
    </div>
);

function Viewport() {
    return (
        <main className="flex min-w-0 flex-1 flex-col">
            <div className="relative min-h-0 flex-1 overflow-hidden bg-[linear-gradient(#333366,#9898ad)]">
                <Model />
                <NavCube />
                <AxisCross />
            </div>
            <div className="mt-px flex h-[30px] shrink-0 border-t border-[#b0b0b0]">
                <DocTab text="Página de inicio" />
                <DocTab text="monedero_clasico : 1" active />
            </div>
        </main>
    );
}

function StatusBar() {
    return (
        <footer className="flex h-[31px] shrink-0 items-center justify-between pt-[2px] pl-[2px]">
            <p className="whitespace-nowrap">Preselected: Unnamed.Thickness.Face3 (35.000000 mm, -15.195684 mm, 4.320781 mm)</p>
            <div className="flex items-center whitespace-nowrap">
                <button type="button" className="flex items-center gap-1">
                    <svg viewBox="0 0 10 14" className="h-[14px] w-[10px]" fill="none" stroke="#555" strokeWidth="1.400" aria-hidden="true">
                        <rect x="1" y="1" width="8" height="12" rx="3.500" />
                        <path d="M5 3V6" />
                    </svg>
                    CAD
                    <svg viewBox="0 0 6 4" className="ml-[2px] h-1 w-[6px]" aria-hidden="true"><path d="M0 0H6L3 3.500z" fill="#666" /></svg>
                </button>
                <span className="ml-3">288,46 mm x 168,34 mm</span>
                <div className="ml-3 h-3 w-3 self-end bg-[radial-gradient(#aaa_30%,transparent_40%)] bg-[size:3px_3px] [clip-path:polygon(100%_0,100%_100%,0_100%)]" />
            </div>
        </footer>
    );
}

export default function App() {
    return (
        <div className="flex h-screen flex-col overflow-hidden bg-[#efefef] font-['Noto_Sans','Open_Sans',sans-serif] text-[14px] leading-[19px] text-black">
            <Gradients />
            <MenuBar />
            <Toolbars />
            <div className="mt-px flex min-h-0 flex-1 gap-[6px]">
                <ComboView />
                <Viewport />
            </div>
            <StatusBar />
        </div>
    );
}
